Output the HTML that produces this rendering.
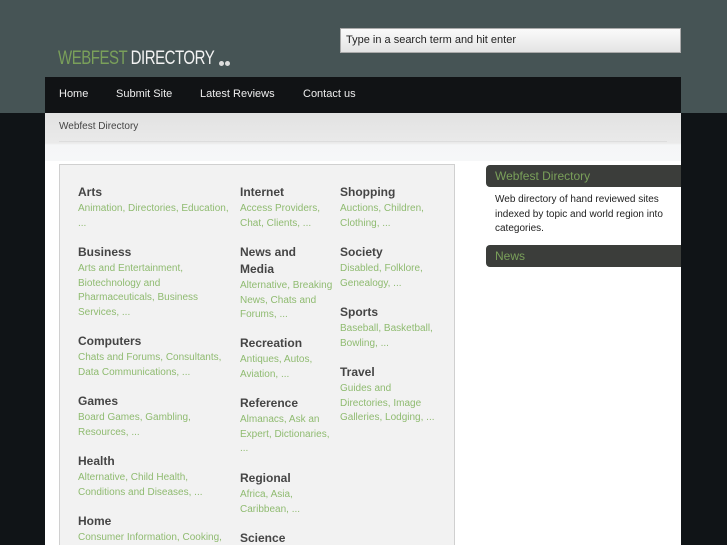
<!DOCTYPE html>
<html style="height:545px;overflow:hidden"><head><meta charset="utf-8"><style>
*{margin:0;padding:0;box-sizing:border-box}
body{width:727px;height:545px;overflow:hidden;background:#101417;font-family:"Liberation Sans",sans-serif;position:relative}
.top{position:absolute;left:0;top:0;width:727px;height:113px;background:#465455}
.logo{position:absolute;left:58px;top:48px;font-size:19px;letter-spacing:-0.6px;color:#f2f2f2;white-space:nowrap;transform:scaleX(.79);transform-origin:left;font-weight:normal}
.logo span{color:#7aa05a}
.dots{position:absolute;left:219px;top:61px;line-height:0}
.dots i{display:inline-block;width:5px;height:5px;border-radius:50%;background:#ddd;margin-right:1px}
.search{position:absolute;left:340px;top:28px;width:341px;height:25px;border:1px solid #aaa;background:linear-gradient(#fafafa,#e4e4e4);font-size:11px;color:#222;padding:5px 0 0 5px}
.nav{position:absolute;left:45px;top:77px;width:636px;height:36px;background:#111315}
.nav a{position:absolute;top:11px;color:#eee;font-size:11px;text-decoration:none}
.main{position:absolute;left:45px;top:113px;width:636px;height:432px;background:#fff;overflow:hidden}
.bc{position:absolute;left:0;top:0;width:636px;height:48px;background:linear-gradient(#e2e2e2,#eaeaea 30px,#f5f6f7 32px,#f6f7f8)}
.bc div{position:absolute;left:14px;top:8px;font-size:10px;color:#444}
.bc hr{position:absolute;left:14px;top:28px;width:608px;border:0;border-top:1px solid #ddd}
.box{position:absolute;left:14px;top:51px;width:396px;height:390px;background:#f2f2f2;border:1px solid #d0d0d0}
.c{position:absolute;font-size:10px;line-height:14.6px;color:#8fbb70;white-space:nowrap}
.c b{display:block;font-size:12px;color:#454545;line-height:17px;margin-bottom:1px}
.sh{position:absolute;left:441px;width:200px;height:22px;background:#3b3d3a;border-radius:4px 0 0 4px;color:#7aa05a;font-size:12px;padding:4px 0 0 9px}
.st{position:absolute;left:450px;top:78px;font-size:10px;line-height:14.6px;color:#222}
</style></head><body>
<div class="top"></div>
<div class="logo"><span>WEBFEST</span> DIRECTORY</div>
<div class="dots"><i></i><i></i></div>
<div class="search">Type in a search term and hit enter</div>
<div class="nav"><a style="left:14px">Home</a><a style="left:71px">Submit Site</a><a style="left:155px">Latest Reviews</a><a style="left:258px">Contact us</a></div>
<div class="main">
<div class="bc"><div>Webfest Directory</div><hr></div>
<div class="box"></div>
<div class="c" style="left:33px;top:71px"><b>Arts</b>Animation, Directories, Education,<br>...</div>
<div class="c" style="left:33px;top:131px"><b>Business</b>Arts and Entertainment,<br>Biotechnology and<br>Pharmaceuticals, Business<br>Services, ...</div>
<div class="c" style="left:33px;top:220px"><b>Computers</b>Chats and Forums, Consultants,<br>Data Communications, ...</div>
<div class="c" style="left:33px;top:280px"><b>Games</b>Board Games, Gambling,<br>Resources, ...</div>
<div class="c" style="left:33px;top:340px"><b>Health</b>Alternative, Child Health,<br>Conditions and Diseases, ...</div>
<div class="c" style="left:33px;top:400px"><b>Home</b>Consumer Information, Cooking,</div>
<div class="c" style="left:195px;top:71px"><b>Internet</b>Access Providers,<br>Chat, Clients, ...</div>
<div class="c" style="left:195px;top:131px"><b>News and<br>Media</b>Alternative, Breaking<br>News, Chats and<br>Forums, ...</div>
<div class="c" style="left:195px;top:222px"><b>Recreation</b>Antiques, Autos,<br>Aviation, ...</div>
<div class="c" style="left:195px;top:282px"><b>Reference</b>Almanacs, Ask an<br>Expert, Dictionaries,<br>...</div>
<div class="c" style="left:195px;top:357px"><b>Regional</b>Africa, Asia,<br>Caribbean, ...</div>
<div class="c" style="left:195px;top:417px"><b>Science</b></div>
<div class="c" style="left:295px;top:71px"><b>Shopping</b>Auctions, Children,<br>Clothing, ...</div>
<div class="c" style="left:295px;top:131px"><b>Society</b>Disabled, Folklore,<br>Genealogy, ...</div>
<div class="c" style="left:295px;top:191px"><b>Sports</b>Baseball, Basketball,<br>Bowling, ...</div>
<div class="c" style="left:295px;top:251px"><b>Travel</b>Guides and<br>Directories, Image<br>Galleries, Lodging, ...</div>
<div class="sh" style="top:52px">Webfest Directory</div>
<div class="st" style="top:80px">Web directory of hand reviewed sites<br>indexed by topic and world region into<br>categories.</div>
<div class="sh" style="top:132px">News</div>
</div>
</body></html>
